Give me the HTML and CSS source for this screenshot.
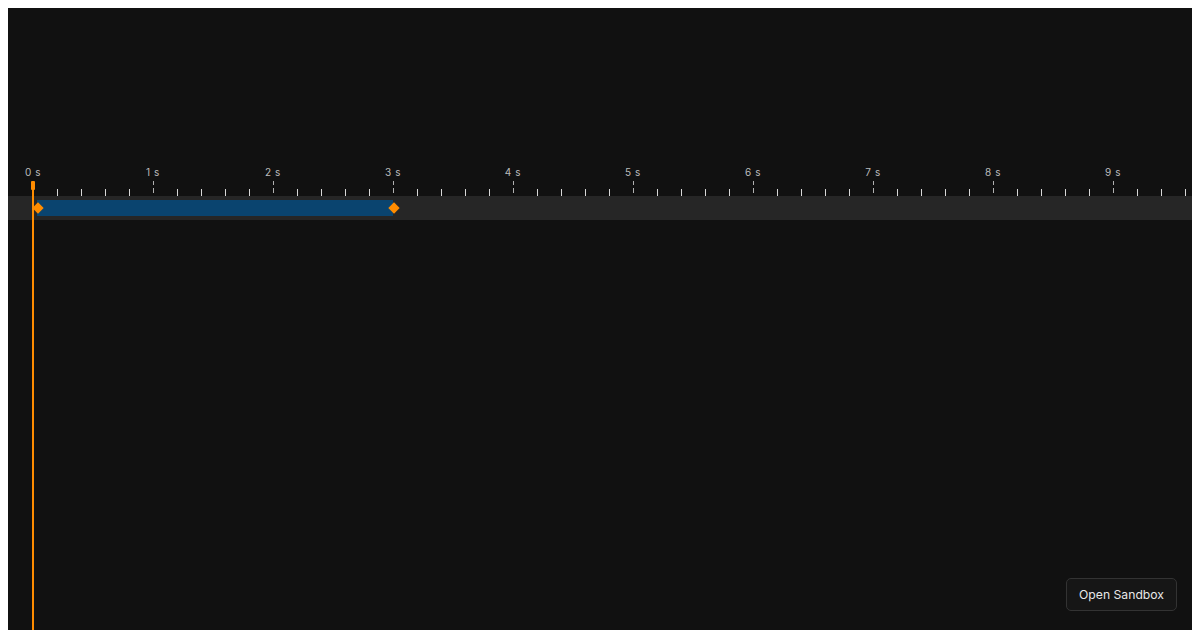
FILE: index.html
```html
<!DOCTYPE html>
<html>
<head>
<meta charset="utf-8">
<link rel="stylesheet" href="styles.css">
</head>
<body>
<div class="stage">
  <div class="spacer"></div>
  <div class="ruler">
    <div class="units">
      <div class="unit"><span class="label">0 s</span><span class="major"></span></div>
      <div class="unit"><span class="label">1 s</span><span class="major"></span></div>
      <div class="unit"><span class="label">2 s</span><span class="major"></span></div>
      <div class="unit"><span class="label">3 s</span><span class="major"></span></div>
      <div class="unit"><span class="label">4 s</span><span class="major"></span></div>
      <div class="unit"><span class="label">5 s</span><span class="major"></span></div>
      <div class="unit"><span class="label">6 s</span><span class="major"></span></div>
      <div class="unit"><span class="label">7 s</span><span class="major"></span></div>
      <div class="unit"><span class="label">8 s</span><span class="major"></span></div>
      <div class="unit"><span class="label">9 s</span><span class="major"></span></div>
    </div>
    <div class="minors"></div>
  </div>
  <div class="track">
    <div class="bar">
      <span class="key key-start"></span>
      <span class="key key-end"></span>
    </div>
  </div>
  <div class="playhead"><span class="handle"></span></div>
  <button class="sandbox">Open Sandbox</button>
</div>
</body>
</html>
```

FILE: styles.css
```css
html, body {
  overflow: hidden;
}
body {
  margin: 8px;
  background: #ffffff;
  font-family: Inter, "Liberation Sans", sans-serif;
}
.stage {
  position: relative;
  height: 100vh;
  background: #111111;
  overflow: hidden;
}
.spacer {
  height: 156px;
}
.ruler {
  display: grid;
  height: 32px;
}
.units, .minors {
  grid-area: 1 / 1;
}
.units {
  display: flex;
  margin-left: -35px;
}
.unit {
  flex: none;
  width: 120px;
  display: flex;
  flex-direction: column;
  align-items: center;
}
.label {
  margin-top: 2px;
  height: 12px;
  line-height: 12px;
  font-size: 10px;
  letter-spacing: 0.6px;
  color: #bcbcbc;
  white-space: nowrap;
}
.major {
  margin-top: 3px;
  width: 1px;
  height: 12px;
  background: linear-gradient(to bottom, #b0b0b0 0 4px, transparent 4px 7px, #b0b0b0 7px 12px);
}
.minors {
  align-self: end;
  height: 7px;
  margin-left: 25px;
  background-image: linear-gradient(to right,
    transparent 24px, #d8d8d8 24px 25px,
    transparent 25px 48px, #d8d8d8 48px 49px,
    transparent 49px 72px, #d8d8d8 72px 73px,
    transparent 73px 96px, #d8d8d8 96px 97px,
    transparent 97px);
  background-size: 120px 100%;
  background-repeat: repeat-x;
}
.track {
  height: 24px;
  background: #262626;
  display: flex;
  align-items: center;
}
.bar {
  position: relative;
  margin-left: 29px;
  width: 356px;
  height: 16px;
  background: #0a446f;
}
.key {
  position: absolute;
  top: 4px;
  width: 8px;
  height: 8px;
  background: #ff8c00;
  transform: rotate(45deg);
}
.key-start {
  left: -3.5px;
}
.key-end {
  right: -4.5px;
}
.playhead {
  position: absolute;
  left: 24px;
  top: 173px;
  bottom: 0;
  width: 2px;
  background: #ff8c00;
}
.handle {
  position: absolute;
  left: -1px;
  top: 0;
  width: 4px;
  height: 9px;
  border-radius: 1px;
  background: #ff8c00;
}
.sandbox {
  position: absolute;
  right: 15px;
  bottom: 27px;
  height: 33px;
  padding: 0 12px;
  border: 1px solid #333333;
  border-radius: 5px;
  background: #161616;
  color: #e8e8e8;
  font-family: Inter, "Liberation Sans", sans-serif;
  font-size: 12.2px;
  cursor: pointer;
}
```
